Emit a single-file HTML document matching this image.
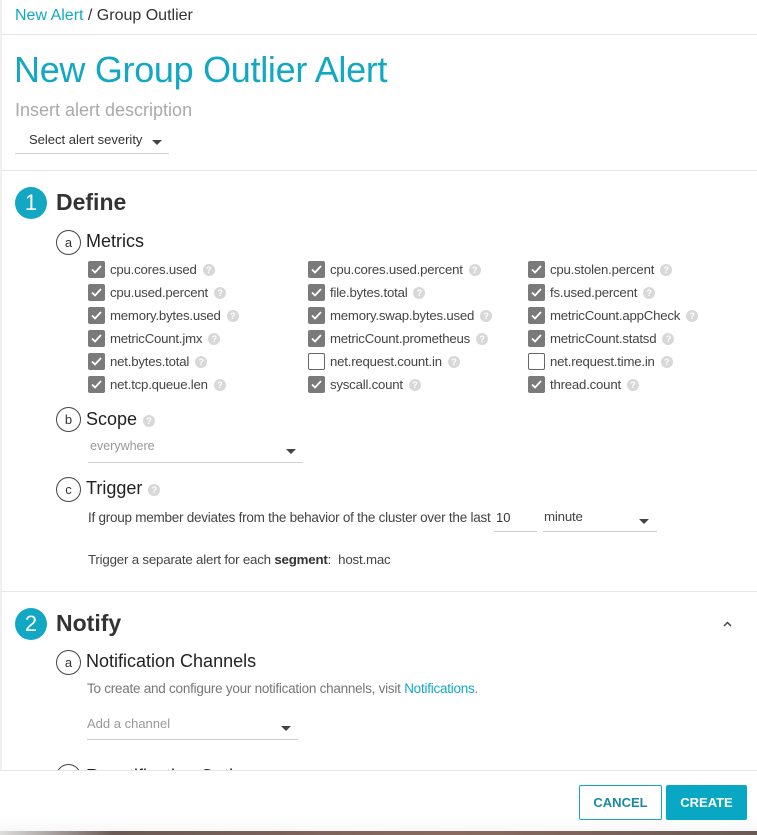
<!DOCTYPE html>
<html><head><meta charset="utf-8"><style>
*{box-sizing:border-box;margin:0;padding:0}
body{width:757px;height:835px;overflow:hidden;background:#fff;font-family:"Liberation Sans",sans-serif;color:#333;position:relative}
.a{position:absolute;white-space:nowrap}
.hr{position:absolute;left:0;width:757px;height:1px;background:#e4e8e8}
.num{position:absolute;width:32px;height:32px;border-radius:50%;background:#12a8c4;color:#fff;font-size:22px;text-align:center;line-height:32px}
.h1{font-size:23px;font-weight:bold;color:#333}
.let{position:absolute;width:25px;height:25px;border:1px solid #444;border-radius:50%;font-size:13px;text-align:center;line-height:23px}
.h2{font-size:18px;color:#222}
.cb{position:absolute;width:17px;height:17px;border-radius:2px;background:#7a7a7a}
.cb.off{background:#fff;border:1.5px solid #666}
.cb svg{position:absolute;left:2px;top:2px}
.lbl{font-size:13.2px;color:#444;letter-spacing:-.2px}
.q{display:inline-block;width:12px;height:12px;border-radius:50%;background:#d8d8d8;color:#fff;font-size:9px;font-weight:bold;text-align:center;line-height:12px;vertical-align:1px;margin-left:6px}
.line{position:absolute;height:1px;background:#cfcfcf}
.tri{position:absolute;width:0;height:0;border-left:5px solid transparent;border-right:5px solid transparent;border-top:5px solid #444}
.sm{font-size:13.3px;color:#444;letter-spacing:-.2px}
</style></head><body>
<div style="position:absolute;left:0;top:0;width:2px;height:835px;background:#f0f0f0"></div>
<div class="a" style="left:15px;top:7px;font-size:16px;color:#333"><span style="color:#12a8c4">New Alert</span> / Group Outlier</div>
<div class="hr" style="top:34px"></div>
<div class="a" style="left:14px;top:49px;font-size:36px;color:#12a8c4;letter-spacing:-.3px">New Group Outlier Alert</div>
<div class="a" style="left:15px;top:100px;font-size:18px;color:#aaa">Insert alert description</div>
<div class="a" style="left:29px;top:132px;font-size:13px;color:#333">Select alert severity</div>
<div class="tri" style="left:152px;top:140px"></div>
<div class="line" style="left:15px;top:153px;width:154px"></div>
<div class="hr" style="top:170px"></div>

<div class="num" style="left:15px;top:187px">1</div>
<div class="a h1" style="left:56px;top:189px">Define</div>
<div class="let" style="left:56px;top:230px">a</div>
<div class="a h2" style="left:86px;top:231px">Metrics</div>

<div id="m"></div>

<div class="let" style="left:56px;top:407px">b</div>
<div class="a h2" style="left:86px;top:409px">Scope<span class="q">?</span></div>
<div class="a" style="left:90px;top:439px;font-size:12.5px;color:#999">everywhere</div>
<div class="tri" style="left:286px;top:449px"></div>
<div class="line" style="left:88px;top:462px;width:215px"></div>

<div class="let" style="left:56px;top:477px">c</div>
<div class="a h2" style="left:86px;top:478px">Trigger<span class="q">?</span></div>
<div class="a sm" style="left:88px;top:510px;font-size:13.5px;letter-spacing:-.25px">If group member deviates from the behavior of the cluster over the last</div>
<div class="a" style="left:496px;top:510px;font-size:13px;color:#333">10</div>
<div class="line" style="left:494px;top:531px;width:43px"></div>
<div class="a sm" style="left:544px;top:509px">minute</div>
<div class="tri" style="left:639px;top:519px"></div>
<div class="line" style="left:543px;top:531px;width:114px"></div>
<div class="a sm" style="left:88px;top:552px">Trigger a separate alert for each <b style="color:#333">segment</b>:&nbsp; host.mac</div>
<div class="hr" style="top:591px"></div>

<div class="num" style="left:15px;top:608px">2</div>
<div class="a h1" style="left:56px;top:610px">Notify</div>
<svg class="a" style="left:722px;top:620px" width="11" height="8" viewBox="0 0 11 8"><path d="M2 6 L5.5 2.5 L9 6" stroke="#444" stroke-width="1.5" fill="none"/></svg>
<div class="let" style="left:56px;top:650px">a</div>
<div class="a h2" style="left:86px;top:651px">Notification Channels</div>
<div class="a sm" style="left:87px;top:681px;color:#777;font-size:13.5px;letter-spacing:-.25px">To create and configure your notification channels, visit <span style="color:#12a8c4">Notifications</span>.</div>
<div class="a" style="left:87px;top:716px;font-size:13px;color:#999">Add a channel</div>
<div class="tri" style="left:281px;top:726px"></div>
<div class="line" style="left:87px;top:739px;width:211px"></div>
<div class="let" style="left:56px;top:764px">b</div>
<div class="a h2" style="left:86px;top:766px">Renotification Options</div>

<div style="position:absolute;left:0;top:770px;width:757px;height:65px;background:linear-gradient(#fff,#fff 70%,#f6f6f6);border-top:1px solid #e4e8e8"></div>
<div style="position:absolute;left:0;top:831px;width:757px;height:4px;background:linear-gradient(90deg,#ddd,#6b5a55 15%,#8a6a60 60%,#6a5a55)"></div>
<div style="position:absolute;left:579px;top:785px;width:83px;height:35px;border:1px solid #12a8c4;border-radius:2px;background:#fff;color:#1a8aa3;font-weight:bold;font-size:13px;text-align:center;line-height:33px">CANCEL</div>
<div style="position:absolute;left:666px;top:785px;width:81px;height:35px;border-radius:2px;background:#08a8c4;color:#fff;font-weight:bold;font-size:13px;text-align:center;line-height:35px">CREATE</div>

<script>
var cols=[88,308,528],rows=[[ "cpu.cores.used","cpu.cores.used.percent","cpu.stolen.percent"],["cpu.used.percent","file.bytes.total","fs.used.percent"],["memory.bytes.used","memory.swap.bytes.used","metricCount.appCheck"],["metricCount.jmx","metricCount.prometheus","metricCount.statsd"],["net.bytes.total","net.request.count.in","net.request.time.in"],["net.tcp.queue.len","syscall.count","thread.count"]];
var off={"net.request.count.in":1,"net.request.time.in":1},h="";
rows.forEach(function(r,i){var y=261+i*23;r.forEach(function(n,j){var x=cols[j];
h+='<div class="cb'+(off[n]?' off':'')+'" style="left:'+x+'px;top:'+y+'px">'+(off[n]?'':'<svg width="13" height="13" viewBox="0 0 13 13"><path d="M2 6.5 L5 9.5 L11 3" stroke="#fff" stroke-width="1.8" fill="none"/></svg>')+'</div>';
h+='<div class="a lbl" style="left:'+(x+22)+'px;top:'+(y+1)+'px">'+n+'<span class="q">?</span></div>';});});
document.getElementById('m').outerHTML=h;
</script>
</body></html>
